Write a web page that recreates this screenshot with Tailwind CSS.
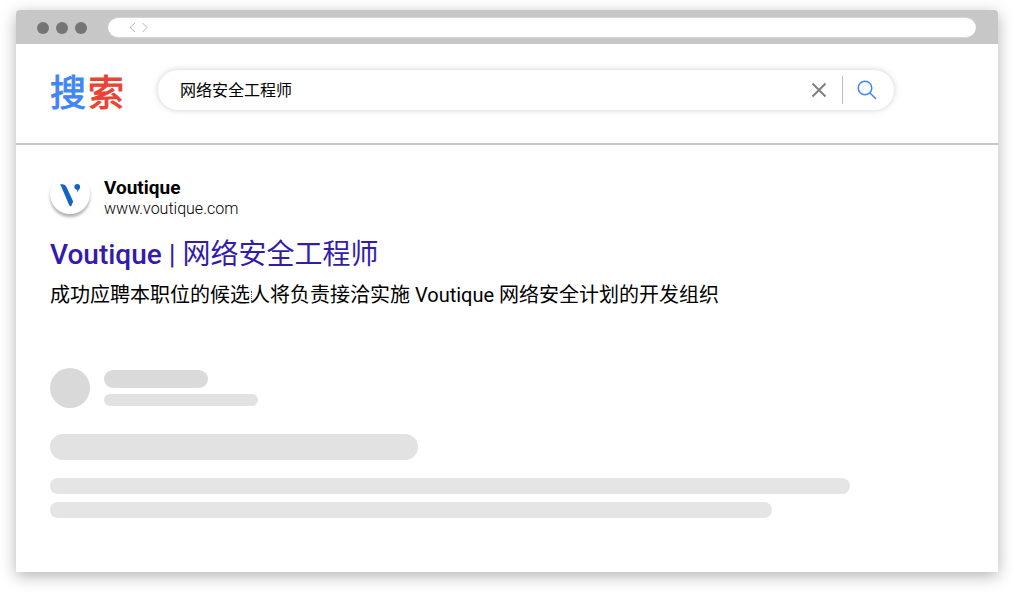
<!DOCTYPE html>
<html lang="zh-Hans">
<head>
  <meta charset="UTF-8" />
  <meta name="viewport" content="width=device-width, initial-scale=1.0" />
  <title>搜索</title>
  <script src="https://cdn.jsdelivr.net/npm/@tailwindcss/browser@4"></script>
</head>
<body class="flex min-h-screen bg-white px-4 pt-[10px] pb-[22px] font-[Roboto,'Noto_Sans_CJK_SC',sans-serif] text-black">
  <div class="flex flex-1 flex-col rounded-t bg-white shadow-[0_4px_16px_rgba(0,0,0,0.3)]">
    <!-- Browser bar -->
    <div class="flex items-center rounded-t bg-[#c7c7c7] pt-[7px] pr-[22px] pb-[6px] pl-[21px]">
      <div class="flex gap-[7px]">
        <span class="size-3 rounded-full bg-[#757575]"></span>
        <span class="size-3 rounded-full bg-[#757575]"></span>
        <span class="size-3 rounded-full bg-[#757575]"></span>
      </div>
      <div class="ml-[21px] flex h-[21px] flex-1 items-center rounded-full border-y border-[#d6d6d6] bg-white pl-5">
        <svg class="h-[11px] w-5" viewBox="0 0 20 11" fill="none" stroke="#b5b5b5" stroke-width="1">
          <path d="M7 1 L2 5.5 L7 10" />
          <path d="M14.500 1 L19 5.500 L14.500 10" />
        </svg>
      </div>
    </div>

    <!-- Search header -->
    <header class="flex items-center border-b-2 border-[#c7c7c7] px-[34px] pt-[26px] pb-[33px]">
      <div class="flex h-10 gap-[2px] pt-1 text-[36px] leading-10 [-webkit-text-stroke:1px_currentColor]"><span class="text-[#4285f4]">搜</span><span class="text-[#ea4335]">索</span></div>
      <form class="ml-[34px] flex h-10 max-w-[736px] flex-1 items-center rounded-full bg-white pr-[17px] pl-[22px] shadow-[0_0_6px_rgba(0,0,0,0.2)]">
        <input type="text" aria-label="搜索" value="网络安全工程师" class="min-w-0 flex-1 pt-[2px] text-base outline-none" />
        <button type="button" aria-label="清除">
          <svg class="size-4" viewBox="0 0 16 16" fill="none" stroke="#808080" stroke-width="2">
            <path d="M1.500 1.500 L14.500 14.500 M14.500 1.500 L1.500 14.500" />
          </svg>
        </button>
        <span class="mr-[14px] ml-[15px] h-7 w-px bg-[#bdbdbd]"></span>
        <button type="submit" aria-label="搜索">
          <svg class="size-5" viewBox="0 0 20 20" fill="none" stroke="#4285f4" stroke-width="1.500">
            <circle cx="8" cy="8" r="6.800" />
            <path d="M12.800 12.800 L19 19" />
          </svg>
        </button>
      </form>
    </header>

    <main class="px-[34px] pt-[29px] pb-[54px]">
      <!-- Result -->
      <article>
        <div class="flex items-start gap-[14px]">
          <div class="grid size-10 place-items-center rounded-full bg-white shadow-[0_3px_3px_rgba(0,0,0,0.3)]">
            <svg class="size-10" viewBox="0 0 40 40" fill="#1265c0">
              <path d="M10 10.500 C13.500 9.800 15.500 10.800 16.600 13.300 L23.200 27.500 L21 32.500 L19.300 31.500 L12.300 15 C11.700 13 11 11.800 10 10.500 Z" />
              <path d="M27.300 10 C29.300 10 30.300 11.400 30.100 13.200 C29.900 14.800 28.500 16.200 27.200 18.300 L27.300 15.900 C25.400 15.500 24.300 14.500 24.300 13 C24.300 11.200 25.500 10 27.300 10 Z" />
            </svg>
          </div>
          <div class="flex flex-col pt-[2px]">
            <span class="text-[19px] leading-[23px] font-bold">Voutique</span>
            <span class="text-base leading-5 font-light">www.voutique.com</span>
          </div>
        </div>
        <h2 class="mt-4 text-[28px] leading-10 text-[#331cac]">
          <a href="#"><span class="font-medium">Voutique</span> | 网络安全工程师</a>
        </h2>
        <p class="mt-1 text-xl leading-8">成功应聘本职位的候选<span class="relative"><span class="absolute top-2 left-px h-3 border-l border-dotted border-gray-600"></span></span>人将负责接洽实施 Voutique 网络安全计划的开发组织</p>
      </article>

      <!-- Placeholder result -->
      <div class="mt-[57px]">
        <div class="flex items-center gap-[14px]">
          <div class="size-10 rounded-full bg-[#d9d9d9]"></div>
          <div class="flex flex-col gap-[6px]">
            <div class="h-[18px] w-[104px] rounded-full bg-[#dadada]"></div>
            <div class="h-3 w-[154px] rounded-full bg-[#e2e2e2]"></div>
          </div>
        </div>
        <div class="mt-[26px] h-[26px] max-w-[368px] rounded-full bg-[#e2e2e2]"></div>
        <div class="mt-[18px] h-4 max-w-[800px] rounded-full bg-[#e5e5e5]"></div>
        <div class="mt-2 h-4 max-w-[722px] rounded-full bg-[#e5e5e5]"></div>
      </div>
    </main>
  </div>
</body>
</html>
